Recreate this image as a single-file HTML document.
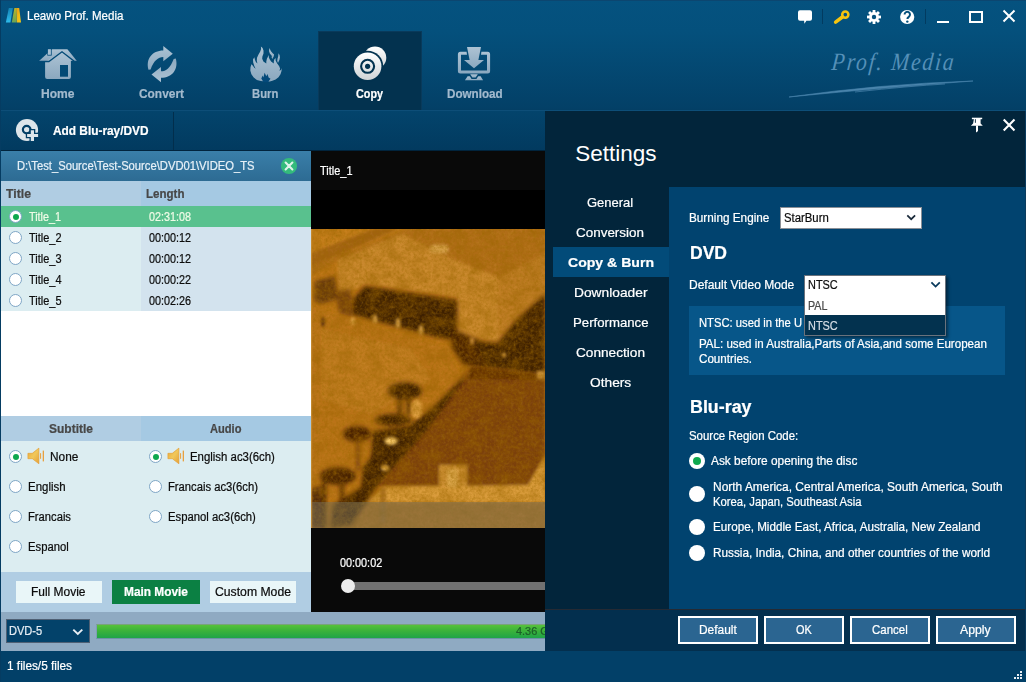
<!DOCTYPE html>
<html><head><meta charset="utf-8">
<style>
*{box-sizing:border-box;margin:0;padding:0}
html,body{width:1026px;height:682px;overflow:hidden;background:#03436a}
body{font-family:"Liberation Sans",sans-serif;font-size:12px;color:#fff;position:relative}
.a{position:absolute}
.t{position:absolute;white-space:pre;line-height:1;transform-origin:0 0;-webkit-text-stroke:.22px currentColor}
.b{font-weight:bold}
svg{position:absolute;overflow:visible}
.r{position:absolute;width:13px;height:13px;border-radius:50%;background:#fff;border:1px solid #7fa6c6}
.r.on:after{content:"";position:absolute;left:2.5px;top:2.5px;width:6px;height:6px;border-radius:50%;background:#0fa84e}
.R{position:absolute;width:16px;height:16px;border-radius:50%;background:#fff}
.btn{position:absolute;top:616px;width:80px;height:28px;border:2px solid #fff;background:#2b6591}
</style></head><body>
<!-- window bg -->
<div class="a" style="left:0;top:0;width:1026px;height:111px;background:linear-gradient(#05527f 0,#04507c 32px,#034067 108px,#033e63 111px)"></div>
<div class="a" style="left:0;top:0;width:1026px;height:1px;background:#0c4670"></div>
<div class="a" style="left:0;top:0;width:1px;height:682px;background:#053c62;z-index:5"></div>

<!-- logo -->
<svg style="left:0;top:0" width="30" height="30" viewBox="0 0 30 30">
<defs><linearGradient id="lg1" x1="0" y1="0" x2="0" y2="1"><stop offset="0" stop-color="#1583b4"/><stop offset="1" stop-color="#2ebcec"/></linearGradient>
<linearGradient id="lg2" x1="0" y1="0" x2="0" y2="1"><stop offset="0" stop-color="#bdb424"/><stop offset="1" stop-color="#66a558"/></linearGradient>
<linearGradient id="lg3" x1="0" y1="0" x2="1" y2="1"><stop offset="0" stop-color="#e8981a"/><stop offset=".5" stop-color="#f0bc14"/><stop offset="1" stop-color="#f5cc14"/></linearGradient></defs>
<path d="M8.8,8.1 L12.9,8.1 L10.4,22.6 L5.9,22.6 Z" fill="url(#lg1)"/>
<path d="M14.4,8.1 L16.9,8.1 L16.6,22.6 L11.8,22.6 Z" fill="url(#lg2)"/>
<path d="M16.7,8.1 L19.2,8.1 L21,22.6 L16.8,22.6 Z" fill="url(#lg3)"/>
</svg>

<!-- title icons -->
<svg style="left:0;top:0" width="1026" height="30" viewBox="0 0 1026 30">
<path d="M800,10.2 h10 a2,2 0 0 1 2,2 v6.6 a2,2 0 0 1 -2,2 h-3.6 l-2,3 l-0.3,-3 h-4.1 a2,2 0 0 1 -2,-2 v-6.6 a2,2 0 0 1 2,-2z" fill="#fff"/>
<rect x="822" y="9" width="1" height="15" fill="#023b60"/>
<rect x="925" y="9" width="1" height="15" fill="#023b60"/>
<g fill="none" stroke="#f6c40f"><circle cx="845.3" cy="14.6" r="3.1" stroke-width="2.5"/><path d="M842.4,17 L835.6,22.2" stroke-width="3.5" stroke-linecap="round"/></g>
<g transform="translate(874,17)"><g fill="#fff"><circle r="4.9"/><g id="th"><rect x="-1.4" y="-7" width="2.8" height="14"/></g><use href="#th" transform="rotate(45)"/><use href="#th" transform="rotate(90)"/><use href="#th" transform="rotate(135)"/></g><circle r="2.2" fill="#04507c"/></g>
<circle cx="907.2" cy="17" r="7.1" fill="#fff"/>
<path d="M904.6,14.6 a2.7,2.7 0 1 1 4.2,2.2 q-1.4,0.9 -1.4,2.2" fill="none" stroke="#04507c" stroke-width="2"/><circle cx="907.3" cy="21.6" r="1.2" fill="#04507c"/>
<rect x="937" y="21" width="12" height="2" fill="#fff"/>
<rect x="970" y="12" width="12" height="10" fill="none" stroke="#fff" stroke-width="2"/>
<path d="M1003.5,10.5 L1014.5,21.5 M1014.5,10.5 L1003.5,21.5" stroke="#fff" stroke-width="2" fill="none"/>
</svg>

<!-- Prof. Media script -->
<div class="t" style="left:833px;top:49px;font-family:'Liberation Serif',serif;font-style:italic;font-size:25px;color:#5590b8;letter-spacing:2.2px;-webkit-text-stroke:0;transform:scaleX(.86) skewX(-6deg)">Prof. Media</div>
<svg style="left:0;top:0" width="1026" height="110" viewBox="0 0 1026 110"><path d="M789,97 Q880,84 973,81 Q890,87 789,97z" fill="#4a84ac" stroke="#4a84ac" stroke-width=".6"/><path d="M855,92 Q910,86 945,84" stroke="#4a84ac" stroke-width=".7" fill="none"/></svg>

<!-- toolbar -->
<div class="a" style="left:318px;top:31px;width:104px;height:80px;background:#03324f;border:1px solid #093a5b;border-bottom:none"></div>
<svg style="left:0;top:0" width="560" height="111" viewBox="0 0 560 111">
<defs><linearGradient id="ig" x1="0" y1="0" x2="0" y2="1"><stop offset="0" stop-color="#adc3d4"/><stop offset="1" stop-color="#8ba8bf"/></linearGradient>
<linearGradient id="wg" x1="0" y1="0" x2="0" y2="1"><stop offset="0" stop-color="#ffffff"/><stop offset="1" stop-color="#cfd3d6"/></linearGradient></defs>
<!-- home -->
<g fill="url(#ig)">
<path d="M39,60.9 L51.8,49.3 L67.4,49.3 L76.9,60.9 Z"/>
<path d="M45.1,61.8 L62,52 L70.9,58 L70.9,77 a2,2 0 0 1 -2,2 L47.1,79 a2,2 0 0 1 -2,-2 Z"/>
</g>
<path d="M38.6,61.5 L48.9,61.5 L62,51.7 L74.6,61.5 L77.4,61.5" fill="none" stroke="#034a76" stroke-width="1.3" stroke-linejoin="miter"/>
<rect x="47.3" y="48.6" width="4.4" height="7" fill="#034c79"/>
<rect x="47.9" y="49.2" width="3" height="5.6" fill="#a9c0d2"/>
<rect x="60" y="65" width="8" height="11.7" fill="#034a75"/>
<!-- convert -->
<g fill="url(#ig)">
<path id="ar" d="M163.3,46 L172.8,53.7 L163.3,61.3 L163.3,57 C158,57.2 154,60.5 150.6,69.4 L148.5,69.8 C145.6,59 152,50.6 163.3,50.5 Z"/>
<use href="#ar" transform="rotate(180 162.15 64.15)"/>
</g>
<!-- burn -->
<g fill="url(#ig)">
<polygon points="265.9,81.5 260.8,81.1 256.9,79.9 253.7,77.5 251.4,74.3 250.3,70.4 250.5,67.2 251.4,64.3 252.7,65.5 254.3,67.8 255.6,68.8 254.3,65.9 253.2,62.6 253.0,59.4 254.3,57.2 255.0,60.1 255.9,62.0 257.4,63.6 256.8,60.7 257.0,57.8 258.5,54.6 260.1,51.7 261.1,49.1 260.9,46.6 262.6,48.1 263.5,50.4 263.5,53.6 262.4,56.5 262.2,58.8 263.4,61.4 266.3,63.6 266.3,61.4 266.9,58.8 268.8,55.1 268.8,57.2 269.5,59.1 271.1,61.4 273.8,63.6 273.8,61.4 274.3,59.4 275.5,58.1 275.7,60.7 277.2,63.6 279.2,66.2 280.1,68.5 279.5,71.0 281.1,69.7 281.8,68.0 281.5,71.0 280.5,74.3 278.5,77.2 275.6,79.4 272.4,80.7 269.8,81.4"/>
<polygon points="269.5,48.0 270.8,51.0 272.7,53.3 274.1,54.6 273.7,56.5 272.3,58.9 271.6,57.5 271.9,55.9 269.8,53.6 269.0,51.0"/>
<polygon points="278.6,53.2 279.6,55.2 279.9,57.5 279.4,60.1 278.0,63.1 277.2,61.0 277.5,58.8 278.2,56.5"/>
</g>
<polygon fill="#03497a" points="261.3,78.5 262.7,75.4 263.4,77.4 264.6,72.8 266.3,76.2 267.5,73.9 268.6,77.5 270.5,78.8 269.0,80.7 268.2,82.3 263.4,82.3 262.7,80.7"/>
<!-- copy -->
<circle cx="375" cy="57.8" r="11.3" fill="url(#wg)"/>
<circle cx="367.6" cy="66.3" r="15.6" fill="#03324f"/>
<circle cx="367.6" cy="66.3" r="13.8" fill="url(#wg)"/>
<circle cx="367.6" cy="66.3" r="6.5" fill="none" stroke="#03324f" stroke-width="2.1"/>
<circle cx="367.6" cy="66.3" r="2.6" fill="#03324f"/>
<!-- download -->
<g fill="url(#ig)">
<path d="M460.4,51.8 L466.6,51.8 L467,54.8 L461,54.8 L461,70.4 L487,70.4 L487,54.8 L481,54.8 L481.4,51.8 L487.6,51.8 a2.5,2.5 0 0 1 2.5,2.5 L490.1,70.9 a2.5,2.5 0 0 1 -2.5,2.5 L460.4,73.4 a2.5,2.5 0 0 1 -2.5,-2.5 L457.9,54.3 a2.5,2.5 0 0 1 2.5,-2.5 Z"/>
<path d="M467,47 L481,47 L478.4,60 L484,60 L474,68.3 L464,60 L469.6,60 Z"/>
<path d="M470.2,74.3 L477.8,74.3 L475.6,77.6 L472.4,77.6 Z"/>
<path d="M467.6,76.2 L469.8,76.2 L471.6,79 L476.4,79 L478.2,76.2 L480.6,76.2 L483.1,80.2 L464.9,80.2 Z"/>
</g>
</svg>

<!-- add bar -->
<div class="a" style="left:0;top:110px;width:1026px;height:41px;background:linear-gradient(#03446c,#023a5f);border-top:1px solid #0d4e78"></div>
<div class="a" style="left:173px;top:112px;width:1px;height:38px;background:#022e4c"></div>
<div class="a" style="left:0;top:150px;width:545px;height:1px;background:#01243d"></div>
<svg style="left:0;top:110px" width="60" height="41" viewBox="0 110 60 41">
<circle cx="27" cy="130" r="11.1" fill="#dde5ea"/>
<circle cx="26.7" cy="129.6" r="3.8" fill="none" stroke="#023e65" stroke-width="2.2"/>
<path d="M29.5,129 h5.8 v3.7 h4.1 v5.5 h-4.1 v4 h-5.8 v-4 h-3.7 v-5.5 h3.7z" fill="#023e65"/>
<path d="M30.8,130.3 h3.2 v3.7 h4.1 v2.9 h-4.1 v4.1 h-3.2 v-4.1 h-3.7 v-2.9 h3.7z" fill="#dde5ea"/>
</svg>

<!-- left panel -->
<div class="a" style="left:1px;top:151px;width:310px;height:30px;background:linear-gradient(#3a7fa9,#2d6b93)"></div>
<svg style="left:280px;top:157px" width="18" height="18" viewBox="0 0 18 18"><circle cx="9" cy="9" r="8.1" fill="#34bb7c"/><path d="M5.6,5.6 L12.4,12.4 M12.4,5.6 L5.6,12.4" stroke="#dff3ea" stroke-width="2.1" stroke-linecap="round"/></svg>
<div class="a" style="left:1px;top:181px;width:140px;height:25px;background:#b0cde3"></div>
<div class="a" style="left:141px;top:181px;width:170px;height:25px;background:#a5c9e3"></div>
<div class="a" style="left:1px;top:206px;width:140px;height:105px;background:#dcedf1"></div>
<div class="a" style="left:141px;top:206px;width:170px;height:105px;background:#d3e3ee"></div>
<div class="a" style="left:1px;top:206px;width:310px;height:21px;background:#59c18e"></div>
<div class="a" style="left:1px;top:311px;width:310px;height:105px;background:#fff"></div>
<div class="r on" style="left:9px;top:210px"></div>
<div class="r" style="left:9px;top:231px"></div>
<div class="r" style="left:9px;top:252px"></div>
<div class="r" style="left:9px;top:273px"></div>
<div class="r" style="left:9px;top:294px"></div>

<!-- sub/audio -->
<div class="a" style="left:1px;top:416px;width:140px;height:25px;background:#b0cde3"></div>
<div class="a" style="left:141px;top:416px;width:170px;height:25px;background:#a5c9e3"></div>
<div class="a" style="left:1px;top:441px;width:310px;height:131px;background:#dcedf1"></div>
<div class="a" style="left:1px;top:572px;width:310px;height:40px;background:#b0cde3"></div>
<div class="r on" style="left:9px;top:450px"></div>
<div class="r" style="left:9px;top:480px"></div>
<div class="r" style="left:9px;top:510px"></div>
<div class="r" style="left:9px;top:540px"></div>
<div class="r on" style="left:149px;top:450px"></div>
<div class="r" style="left:149px;top:480px"></div>
<div class="r" style="left:149px;top:510px"></div>
<svg style="left:0;top:440px" width="320" height="30" viewBox="0 440 320 30">
<defs><linearGradient id="sp" x1="0" y1="0" x2="1" y2="1"><stop offset="0" stop-color="#e9a63a"/><stop offset=".5" stop-color="#f0c85a"/><stop offset="1" stop-color="#e6a136"/></linearGradient></defs>
<g id="spk"><path d="M27.9,453.3 L32.3,453.3 L38.9,448.1 L38.9,463.8 L32.3,458.7 L27.9,458.7 Z" fill="url(#sp)" stroke="#e39a34" stroke-width=".6"/><rect x="40" y="453.2" width="1.1" height="5.6" fill="#e8a648"/><rect x="42.7" y="450.6" width="1.3" height="10.8" fill="#e8a040"/></g>
<use href="#spk" x="140"/>
</svg>
<div class="a" style="left:16px;top:581px;width:86px;height:22px;background:#e9f6f8"></div>
<div class="a" style="left:112px;top:580px;width:88px;height:24px;background:#0b8043"></div>
<div class="a" style="left:210px;top:581px;width:86px;height:22px;background:#e9f6f8"></div>

<!-- video -->
<div class="a" style="left:311px;top:151px;width:234px;height:461px;background:#090909"></div>
<div class="a" style="left:311px;top:190px;width:234px;height:39px;background:#000"></div>
<!--VS--><svg style="left:311px;top:229px" width="234" height="299" viewBox="0 0 234 299">
<defs>
<filter id="bl" x="-10%" y="-10%" width="120%" height="120%"><feGaussianBlur stdDeviation="1.4"/></filter>
<filter id="bl2" x="-10%" y="-10%" width="120%" height="120%"><feGaussianBlur stdDeviation="2.2"/></filter>
<filter id="nz" x="0" y="0" width="100%" height="100%"><feTurbulence type="fractalNoise" baseFrequency="0.35" numOctaves="3" seed="7"/><feColorMatrix values="0 0 0 0 0.30  0 0 0 0 0.14  0 0 0 0 0.0  1.1 1.1 0 0 -0.85"/></filter>
<filter id="nz2" x="0" y="0" width="100%" height="100%"><feTurbulence type="fractalNoise" baseFrequency="0.3" numOctaves="2" seed="11"/><feColorMatrix values="0 0 0 0 0.95  0 0 0 0 0.62  0 0 0 0 0.15  1.0 0 1.0 0 -0.95"/></filter>
<filter id="nz3" x="0" y="0" width="100%" height="100%"><feTurbulence type="fractalNoise" baseFrequency="0.07 0.09" numOctaves="2" seed="5"/><feColorMatrix values="0 0 0 0 0.28  0 0 0 0 0.12  0 0 0 0 0.0  1.6 1.6 0 0 -1.35"/></filter>
<clipPath id="vc"><rect width="234" height="299"/></clipPath>
</defs>
<g clip-path="url(#vc)">
<rect width="234" height="299" fill="#bc781a"/>
<g filter="url(#bl)">
<polygon points="0,0 95,0 20,30 0,38" fill="#c88424"/>
<polygon points="95,0 234,0 234,25 187,48 141,30 91,5 27,31 0,46 0,38 20,30" fill="#ae701c"/>
<polygon points="0,38 88,0 62,0 0,24" fill="#9e6418"/>
<polygon points="27,31 91,5 141,30 187,48 187,114 146,105 146,68 54,55 27,68" fill="#ca8e34"/>
<polygon points="187,48 234,25 234,66 205,91 187,114" fill="#bd802a"/>
<rect x="119" y="16" width="18" height="8" rx="3" fill="#deae58"/>
<polygon points="0,78 41,91 137,119 150,150 112,188 62,212 30,268 0,272" fill="#b8761c"/>
<polygon points="10,100 100,120 120,150 60,185 10,170" fill="#c08028"/>
</g>
<g filter="url(#bl2)">
<polygon points="4,52 24,47 27,70 10,75 3,72" fill="#56300c"/>
<polygon points="54,57 146,71 146,112 125,108 42,86 42,70" fill="#2c1303"/>
<polygon points="187,114 205,91 234,65 234,146 162,137 160,108 172,113" fill="#2a1203"/>
<polygon points="142,100 160,108 176,140 152,136 140,118" fill="#3a1c06"/>
<polygon points="24,62 40,60 42,88 28,84" fill="#6a3c10"/>
</g>
<g filter="url(#bl)">
<polygon points="175,140 234,146 234,225 217,257 68,257 150,152" fill="#703a0a"/>
<polygon points="160,137 234,146 234,151 155,150" fill="#552a06"/>
<polygon points="75,258 217,256 234,228 234,273 52,273" fill="#dca444"/>
<rect x="128" y="236" width="28" height="21" fill="#cc943a"/>
<rect x="136" y="240" width="11" height="18" fill="#e0b258"/>
</g>
<g filter="url(#bl2)">
<ellipse cx="94" cy="162" rx="17" ry="8.5" fill="#2c1304"/>
<rect x="87" y="165" width="3.5" height="22" fill="#2c1304"/><rect x="96" y="165" width="3.5" height="20" fill="#2c1304"/>
<ellipse cx="82" cy="191" rx="18" ry="6" fill="#2c1304"/>
<ellipse cx="46" cy="205" rx="14" ry="8" fill="#341705"/>
<rect x="45" y="212" width="4" height="30" fill="#6a3a0c"/>
<polygon points="62,202 98,197 112,186 124,176 150,150 160,137 152,152 117,200 66,258 40,296 20,299 22,276 50,258 52,238 60,228" fill="#2a1204"/>
<ellipse cx="27" cy="247" rx="18" ry="9" fill="#331605"/>
<rect x="11" y="250" width="4" height="49" fill="#2c1304"/><rect x="29" y="254" width="4" height="42" fill="#3a1c06"/>
<polygon points="0,260 10,257 11,299 0,299" fill="#3a1c08"/>
</g>
<g filter="url(#bl)">

<ellipse cx="105.5" cy="180" rx="5.5" ry="9.5" fill="#e6ac50"/>
<ellipse cx="80" cy="212" rx="6.5" ry="4" fill="#ffd878"/>
<ellipse cx="74" cy="239" rx="4" ry="3" fill="#f2c260"/>
<rect x="69" y="258" width="6" height="36" fill="#a87428"/>
<ellipse cx="42" cy="92" rx="2" ry="4" fill="#e6b458"/><ellipse cx="64" cy="90" rx="2.2" ry="4.5" fill="#e6b458"/><ellipse cx="87" cy="94" rx="2.2" ry="5.5" fill="#e6b458"/><ellipse cx="110" cy="101" rx="2.2" ry="5" fill="#e6b458"/><ellipse cx="161" cy="112" rx="2" ry="4" fill="#d49a48"/><circle cx="193" cy="126" r="2.2" fill="#e8ae48"/><ellipse cx="12" cy="93" rx="2" ry="5" fill="#4a2508"/>
<rect x="226" y="142" width="8" height="8" fill="#d6a450"/>
</g>
<rect width="234" height="299" filter="url(#nz3)" opacity=".45"/>
<rect width="234" height="299" filter="url(#nz)" opacity=".6"/>
<rect width="234" height="299" filter="url(#nz2)" opacity=".15"/>
<rect id="tint" width="234" height="299" fill="#cc6200" opacity=".13"/>
<rect x="0" y="273" width="234" height="26" fill="#787258" opacity=".52"/>
<rect x="0" y="0" width="1.2" height="299" fill="#c89038" opacity=".8"/>
</g>
</svg>
<!--VE-->
<div class="a" style="left:348px;top:582px;width:197px;height:8px;background:#717171"></div>
<div class="a" style="left:340.5px;top:579px;width:14px;height:14px;border-radius:50%;background:#ececec"></div>

<!-- bottom bar -->
<div class="a" style="left:1px;top:612px;width:544px;height:39px;background:#8faac2"></div>
<div class="a" style="left:6px;top:619px;width:84px;height:24px;background:#03426a;border:1px solid #4f6074"></div>
<svg style="left:72px;top:628px" width="12" height="8" viewBox="0 0 12 8"><path d="M1.3,1.6 L5.8,6 L10.3,1.6" fill="none" stroke="#e8eef4" stroke-width="1.9"/></svg>
<div class="a" style="left:96px;top:624px;width:449px;height:15px;background:linear-gradient(#56c23a 0,#3bb23a 45%,#1fa447 100%);border-top:1px solid #7aa37a;border-bottom:1px solid #6d93a6;border-left:1px solid #7f9db5"></div>
<div class="a" style="left:0;top:651px;width:1026px;height:31px;background:#024068"></div>
<div class="t" style="left:516.3px;top:626px;font-size:11.5px;color:#1c5f28;transform:scaleX(.95)">4.36 G</div>
<svg style="left:1012px;top:670px" width="12" height="12" viewBox="0 0 12 12" fill="#e8eef4"><rect x="8" y="1" width="2" height="2"/><rect x="5" y="4" width="2" height="2"/><rect x="8" y="4" width="2" height="2"/><rect x="2" y="7" width="2" height="2"/><rect x="5" y="7" width="2" height="2"/><rect x="8" y="7" width="2" height="2"/></svg>

<!-- settings -->
<div class="a" style="left:545px;top:111px;width:481px;height:540px;background:#02253b"></div>
<div class="a" style="left:1025px;top:111px;width:1px;height:540px;background:#0a3b5e"></div>
<div class="a" style="left:553px;top:247px;width:116px;height:30px;background:#024b79"></div>
<div class="a" style="left:669px;top:187px;width:356px;height:422px;background:#01436f"></div>
<div class="a" style="left:545px;top:609px;width:480px;height:42px;background:#032f4e;border-top:1px solid #252a33"></div>
<svg style="left:960px;top:112px" width="66" height="28" viewBox="960 112 66 28" fill="#fff">
<rect x="971.9" y="117.7" width="10.3" height="1.5"/><path d="M973.9,119 h6.7 v4.4 l2.2,2.4 h-11.9 l2.2,-2.4 z"/><path d="M976,125.6 h2 v5.4 l-1.4,1.2 h-0.6z"/><rect x="974.9" y="119.2" width=".9" height="3.6" fill="#02253b"/>
<path d="M1003.7,119.6 L1014.5,130.4 M1014.5,119.6 L1003.7,130.4" stroke="#fff" stroke-width="2.1" fill="none"/>
</svg>
<div class="a" style="left:689px;top:306px;width:316px;height:69px;background:#075689"></div>
<div class="a" style="left:780px;top:207px;width:142px;height:21.5px;background:#fff;border:1px solid #8a8f96"></div>
<svg style="left:906px;top:214px" width="12" height="8" viewBox="0 0 12 8"><path d="M1.3,1.4 L5.2,5.2 L9.1,1.4" fill="none" stroke="#1a2a3a" stroke-width="1.7"/></svg>
<div class="R" style="left:689px;top:453px"></div><div class="a" style="left:693px;top:457px;width:8px;height:8px;border-radius:50%;background:#0fa84e"></div>
<div class="R" style="left:689px;top:485.5px"></div>
<div class="R" style="left:689px;top:519px"></div>
<div class="R" style="left:689px;top:544.5px"></div>
<div class="btn" style="left:678px"></div><div class="btn" style="left:764px"></div><div class="btn" style="left:850px"></div><div class="btn" style="left:936px"></div>

<div class="t" style="left:27.0px;top:10.1px;font-size:12.6px;color:#ffffff;transform:scaleX(0.919)">Leawo Prof. Media</div>
<div class="t b" style="left:41.0px;top:87.5px;font-size:12.4px;color:#a3bacd;transform:scaleX(0.973)">Home</div>
<div class="t b" style="left:138.5px;top:87.5px;font-size:12.4px;color:#a3bacd;transform:scaleX(0.961)">Convert</div>
<div class="t b" style="left:252.2px;top:87.5px;font-size:12.4px;color:#a3bacd;transform:scaleX(0.909)">Burn</div>
<div class="t b" style="left:356.0px;top:87.5px;font-size:12.4px;color:#ffffff;transform:scaleX(0.871)">Copy</div>
<div class="t b" style="left:446.5px;top:87.5px;font-size:12.4px;color:#a3bacd;transform:scaleX(0.941)">Download</div>
<div class="t b" style="left:53.0px;top:124.5px;font-size:12.4px;color:#ffffff;transform:scaleX(0.957)">Add Blu-ray/DVD</div>
<div class="t" style="left:17.0px;top:159.8px;font-size:12px;color:#e6f0f7;transform:scaleX(0.935)">D:\Test_Source\Test-Source\DVD01\VIDEO_TS</div>
<div class="t b" style="left:5.5px;top:187.5px;font-size:12.4px;color:#474747;transform:scaleX(0.990)">Title</div>
<div class="t b" style="left:146.0px;top:187.5px;font-size:12.4px;color:#474747;transform:scaleX(0.932)">Length</div>
<div class="t" style="left:28.5px;top:210.8px;font-size:12px;color:#effbe6;transform:scaleX(0.899)">Title_1</div>
<div class="t" style="left:148.5px;top:210.8px;font-size:12px;color:#effbe6;transform:scaleX(0.899)">02:31:08</div>
<div class="t" style="left:28.5px;top:231.8px;font-size:12px;color:#0c0c0c;transform:scaleX(0.913)">Title_2</div>
<div class="t" style="left:148.5px;top:231.8px;font-size:12px;color:#0c0c0c;transform:scaleX(0.899)">00:00:12</div>
<div class="t" style="left:28.5px;top:252.8px;font-size:12px;color:#0c0c0c;transform:scaleX(0.913)">Title_3</div>
<div class="t" style="left:148.5px;top:252.8px;font-size:12px;color:#0c0c0c;transform:scaleX(0.899)">00:00:12</div>
<div class="t" style="left:28.5px;top:273.8px;font-size:12px;color:#0c0c0c;transform:scaleX(0.913)">Title_4</div>
<div class="t" style="left:148.5px;top:273.8px;font-size:12px;color:#0c0c0c;transform:scaleX(0.899)">00:00:22</div>
<div class="t" style="left:28.5px;top:294.8px;font-size:12px;color:#0c0c0c;transform:scaleX(0.913)">Title_5</div>
<div class="t" style="left:148.5px;top:294.8px;font-size:12px;color:#0c0c0c;transform:scaleX(0.899)">00:02:26</div>
<div class="t b" style="left:48.5px;top:422.5px;font-size:12.4px;color:#474747;transform:scaleX(0.968)">Subtitle</div>
<div class="t b" style="left:209.5px;top:422.5px;font-size:12.4px;color:#474747;transform:scaleX(0.897)">Audio</div>
<div class="t" style="left:50.2px;top:450.8px;font-size:12px;color:#0c0c0c;transform:scaleX(0.986)">None</div>
<div class="t" style="left:190.0px;top:450.8px;font-size:12px;color:#0c0c0c;transform:scaleX(0.950)">English ac3(6ch)</div>
<div class="t" style="left:27.5px;top:480.8px;font-size:12px;color:#0c0c0c;transform:scaleX(0.955)">English</div>
<div class="t" style="left:168.0px;top:480.8px;font-size:12px;color:#0c0c0c;transform:scaleX(0.937)">Francais ac3(6ch)</div>
<div class="t" style="left:27.5px;top:510.8px;font-size:12px;color:#0c0c0c;transform:scaleX(0.934)">Francais</div>
<div class="t" style="left:168.0px;top:510.8px;font-size:12px;color:#0c0c0c;transform:scaleX(0.941)">Espanol ac3(6ch)</div>
<div class="t" style="left:27.5px;top:540.8px;font-size:12px;color:#0c0c0c;transform:scaleX(0.938)">Espanol</div>
<div class="t" style="left:31.0px;top:585.8px;font-size:12px;color:#0c0c0c;transform:scaleX(0.997)">Full Movie</div>
<div class="t b" style="left:123.5px;top:585.5px;font-size:12.4px;color:#ffffff;transform:scaleX(0.958)">Main Movie</div>
<div class="t" style="left:214.5px;top:585.8px;font-size:12px;color:#0c0c0c;transform:scaleX(1.017)">Custom Mode</div>
<div class="t" style="left:9.3px;top:624.8px;font-size:12px;color:#e4ecf3;transform:scaleX(0.922)">DVD-5</div>
<div class="t" style="left:6.5px;top:659.8px;font-size:12px;color:#ffffff;transform:scaleX(0.984)">1 files/5 files</div>
<div class="t" style="left:320.0px;top:164.8px;font-size:12px;color:#ffffff;transform:scaleX(0.913)">Title_1</div>
<div class="t" style="left:340.0px;top:556.8px;font-size:12px;color:#ffffff;transform:scaleX(0.903)">00:00:02</div>
<div class="t" style="left:575.2px;top:143.0px;font-size:22.5px;color:#ffffff;transform:scaleX(1.000);-webkit-text-stroke:0">Settings</div>
<div class="t" style="left:587.0px;top:195.5px;font-size:13.6px;color:#ffffff;transform:scaleX(0.955)">General</div>
<div class="t" style="left:576.0px;top:225.5px;font-size:13.6px;color:#ffffff;transform:scaleX(0.989)">Conversion</div>
<div class="t b" style="left:568.0px;top:255.5px;font-size:13.6px;color:#ffffff;transform:scaleX(1.035)">Copy &amp; Burn</div>
<div class="t" style="left:574.0px;top:285.5px;font-size:13.6px;color:#ffffff;transform:scaleX(1.013)">Downloader</div>
<div class="t" style="left:573.0px;top:315.5px;font-size:13.6px;color:#ffffff;transform:scaleX(0.970)">Performance</div>
<div class="t" style="left:576.0px;top:345.5px;font-size:13.6px;color:#ffffff;transform:scaleX(1.003)">Connection</div>
<div class="t" style="left:590.0px;top:375.5px;font-size:13.6px;color:#ffffff;transform:scaleX(1.010)">Others</div>
<div class="t" style="left:689.2px;top:211.8px;font-size:12px;color:#ffffff;transform:scaleX(0.979)">Burning Engine</div>
<div class="t" style="left:783.5px;top:211.8px;font-size:12px;color:#0c0c0c;transform:scaleX(0.944)">StarBurn</div>
<div class="t b" style="left:689.5px;top:243.8px;font-size:18px;color:#ffffff;transform:scaleX(0.973)">DVD</div>
<div class="t" style="left:689.0px;top:278.8px;font-size:12px;color:#ffffff;transform:scaleX(1.001)">Default Video Mode</div>
<div class="t" style="left:698.5px;top:316.8px;font-size:12px;color:#ffffff;transform:scaleX(0.936)">NTSC: used in the U</div>
<div class="t" style="left:698.5px;top:337.8px;font-size:12px;color:#ffffff;transform:scaleX(0.964)">PAL: used in Australia,Parts of Asia,and some European</div>
<div class="t" style="left:698.5px;top:352.8px;font-size:12px;color:#ffffff;transform:scaleX(0.969)">Countries.</div>
<div class="t b" style="left:689.5px;top:397.8px;font-size:18px;color:#ffffff;transform:scaleX(0.992)">Blu-ray</div>
<div class="t" style="left:689.0px;top:429.8px;font-size:12px;color:#ffffff;transform:scaleX(0.952)">Source Region Code:</div>
<div class="t" style="left:710.9px;top:454.8px;font-size:12px;color:#ffffff;transform:scaleX(0.988)">Ask before opening the disc</div>
<div class="t" style="left:712.9px;top:480.8px;font-size:12px;color:#ffffff;transform:scaleX(0.996)">North America, Central America, South America, South</div>
<div class="t" style="left:712.9px;top:495.8px;font-size:12px;color:#ffffff;transform:scaleX(0.939)">Korea, Japan, Southeast Asia</div>
<div class="t" style="left:712.9px;top:520.8px;font-size:12px;color:#ffffff;transform:scaleX(0.973)">Europe, Middle East, Africa, Australia, New Zealand</div>
<div class="t" style="left:712.9px;top:546.8px;font-size:12px;color:#ffffff;transform:scaleX(0.982)">Russia, India, China, and other countries of the world</div>
<div class="t" style="left:699.0px;top:623.5px;font-size:12.4px;color:#ffffff;transform:scaleX(0.963)">Default</div>
<div class="t" style="left:795.9px;top:623.5px;font-size:12.4px;color:#ffffff;transform:scaleX(0.882)">OK</div>
<div class="t" style="left:872.1px;top:623.5px;font-size:12.4px;color:#ffffff;transform:scaleX(0.925)">Cancel</div>
<div class="t" style="left:959.8px;top:623.5px;font-size:12.4px;color:#ffffff;transform:scaleX(0.990)">Apply</div>

<!-- dropdown overlay -->
<div class="a" style="left:804px;top:274.5px;width:141.5px;height:61.5px;background:#fff;border:1px solid #6a727c;box-shadow:2px 2px 3px rgba(0,0,0,.45)"></div>
<div class="a" style="left:805px;top:315px;width:139.5px;height:20px;background:#03324f"></div>
<svg style="left:929.5px;top:281px" width="12" height="8" viewBox="0 0 12 8"><path d="M1.4,1.4 L5.6,5.6 L9.8,1.4" fill="none" stroke="#0a3a5c" stroke-width="1.8"/></svg>
<div class="t" style="left:807.5px;top:278.8px;font-size:12px;color:#0c0c0c;transform:scaleX(0.909)">NTSC</div>
<div class="t" style="left:807.5px;top:299.8px;font-size:12px;color:#4a4a4a;transform:scaleX(0.895)">PAL</div>
<div class="t" style="left:807.5px;top:319.8px;font-size:12px;color:#d5dde5;transform:scaleX(0.909)">NTSC</div>
</body></html>
